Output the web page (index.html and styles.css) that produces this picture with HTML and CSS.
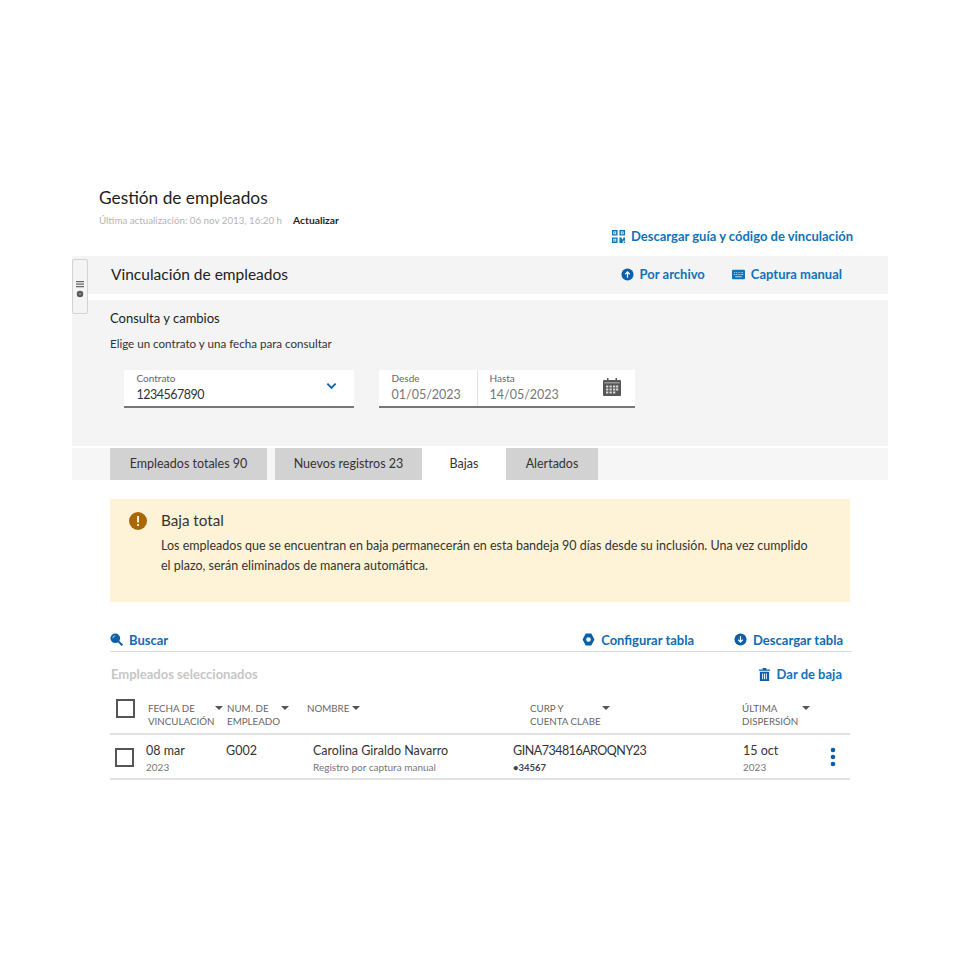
FILE: index.html
```html
<!DOCTYPE html>
<html lang="es">
<head>
<meta charset="utf-8">
<title>Gestión de empleados</title>
<link rel="stylesheet" href="styles.css">
</head>
<body>
<main class="page">
  <header class="page-head">
    <h1 class="title">Gestión de empleados</h1>
    <p class="updated"><span class="updated-date">Última actualización: 06 nov 2013, 16:20 h</span><span class="updated-link">Actualizar</span></p>
    <div class="guide">
      <a class="link">
        <svg class="icon" viewBox="0 0 14 14"><path fill="#1173b8" fill-rule="evenodd" d="M0 0h6v6H0zM1.500 1.500v3h3v-3zM8 0h6v6H8zM9.500 1.500v3h3v-3zM0 8h6v6H0zM1.500 9.500v3h3v-3zM8 8h2.500v2H12V8h2v3.500h-2.500V14H8zM12.500 12.500H14V14h-1.500z"/><path fill="#1173b8" d="M2.300 2.300h1.400v1.400H2.300zM10.300 2.300h1.400v1.400h-1.400zM2.300 10.300h1.400v1.400H2.300z"/></svg>
        Descargar guía y código de vinculación
      </a>
    </div>
  </header>

  <section class="panels">
    <div class="handle">
      <svg class="handle-icon" viewBox="0 0 10 20"><path fill="#666" d="M1 1h8v1.200H1zM1 3.500h8v1.200H1zM1 6h8v1.200H1z"/><circle cx="5" cy="14" r="3.200" fill="#555"/><circle cx="5" cy="14" r="1.300" fill="#888"/></svg>
    </div>

    <div class="bar">
      <h2 class="bar-title">Vinculación de empleados</h2>
      <div class="bar-actions">
        <a class="link">
          <svg class="icon" viewBox="0 0 14 14"><circle cx="7" cy="7" r="6.500" fill="#0a5fa8"/><path fill="none" stroke="#fff" stroke-width="1.300" d="M7 10.500V4.500M4.600 6.700 7 4.200l2.400 2.500"/></svg>
          Por archivo
        </a>
        <a class="link">
          <svg class="icon icon-wide" viewBox="0 0 14 11"><rect y="0.500" width="14" height="10" rx="1" fill="#1173b8"/><path fill="#bcdcf2" d="M2 3h1.200v1H2zM4 3h1.200v1H4zM6 3h1.200v1H6zM8 3h1.200v1H8zM10 3h2v1h-2zM2 5h1.200v1H2zM4 5h1.200v1H4zM6 5h1.200v1H6zM8 5h1.200v1H8zM10 5h2v1h-2zM3.500 7.500h7v1h-7z"/></svg>
          Captura manual
        </a>
      </div>
    </div>

    <div class="query">
      <h3 class="query-title">Consulta y cambios</h3>
      <p class="query-text">Elige un contrato y una fecha para consultar</p>
      <div class="fields">
        <div class="field field-contract">
          <div class="field-part">
            <span class="field-label">Contrato</span>
            <span class="field-value field-number">1234567890</span>
          </div>
          <svg class="chevron" viewBox="0 0 12 8"><path fill="none" stroke="#0a5fa8" stroke-width="2" d="M1.500 1.500 6 6l4.500-4.500"/></svg>
        </div>
        <div class="field field-dates">
          <div class="field-part field-from">
            <span class="field-label">Desde</span>
            <span class="field-value field-muted">01/05/2023</span>
          </div>
          <div class="field-part field-to">
            <span class="field-label">Hasta</span>
            <span class="field-value field-muted">14/05/2023</span>
          </div>
          <svg class="calendar" viewBox="0 0 18 18"><path fill="#565656" d="M1 2h3V0h1.500v2h7V0H14v2h3a1 1 0 0 1 1 1v14a1 1 0 0 1-1 1H1a1 1 0 0 1-1-1V3a1 1 0 0 1 1-1z"/><path fill="#d8d8d8" d="M1.500 4.600h15v.7h-15zM3 7.500h2.300v2H3zM6.500 7.500h2.300v2H6.500zM10 7.500h2.300v2H10zM13 7.500h2.300v2H13zM3 10.500h2.300v2H3zM6.500 10.500h2.300v2H6.500zM10 10.500h2.300v2H10zM13 10.500h2.300v2H13zM3 13.500h2.300v2H3zM6.500 13.500h2.300v2H6.500zM10 13.500h2.300v2H10z"/></svg>
        </div>
      </div>
    </div>

    <nav class="tabs">
      <span class="tab tab-total">Empleados totales 90</span>
      <span class="tab tab-new">Nuevos registros 23</span>
      <span class="tab tab-active">Bajas</span>
      <span class="tab tab-alert">Alertados</span>
    </nav>
  </section>

  <section class="content">
    <div class="notice">
      <svg class="notice-icon" viewBox="0 0 18 18"><circle cx="9" cy="9" r="9" fill="#a9670a"/><path fill="#fbeccd" d="M8 4h2v6.500H8zM8 12h2v2H8z"/></svg>
      <div>
        <h4 class="notice-title">Baja total</h4>
        <p class="notice-text">Los empleados que se encuentran en baja permanecerán en esta bandeja 90 días desde su inclusión. Una vez cumplido<br>el plazo, serán eliminados de manera automática.</p>
      </div>
    </div>

    <div class="toolbar">
      <a class="link">
        <svg class="icon" viewBox="0 0 14 14"><circle cx="5.700" cy="5.700" r="5.200" fill="#0a5fa8"/><path stroke="#0a5fa8" stroke-width="2.200" d="M9 9l4.300 4.300"/><path fill="none" stroke="#9cc7e6" stroke-width="1.100" d="M3 5.700a2.700 2.700 0 0 1 2.700-2.700"/></svg>
        Buscar
      </a>
      <div class="toolbar-right">
        <a class="link">
          <svg class="icon" viewBox="0 0 14 14"><path fill="#0a5fa8" fill-rule="evenodd" d="M4 .6h6L13.400 7 10 13.400H4L.6 7zM7 4.500a2.500 2.500 0 1 0 0 5 2.500 2.500 0 0 0 0-5z"/></svg>
          Configurar tabla
        </a>
        <a class="link">
          <svg class="icon" viewBox="0 0 14 14"><circle cx="7" cy="7" r="6.500" fill="#0a5fa8"/><path fill="none" stroke="#fff" stroke-width="1.300" d="M7 3.500v6M4.600 7.300 7 9.800l2.400-2.500"/></svg>
          Descargar tabla
        </a>
      </div>
    </div>

    <div class="selected">
      <span class="selected-label">Empleados seleccionados</span>
      <a class="link">
        <svg class="icon" viewBox="0 0 14 14"><path fill="#0a5fa8" fill-rule="evenodd" d="M5 0h4v1.500h4V3H1V1.500h4zM2 4h10v10H2zM4.500 6v6h1V6zM6.500 6v6h1V6zM8.500 6v6h1V6z"/></svg>
        Dar de baja
      </a>
    </div>

    <div class="table-head">
      <span class="check check-head"></span>
      <div class="th th-date"><span>FECHA DE<br>VINCULACIÓN</span><i class="caret"></i></div>
      <div class="th th-num"><span>NUM. DE<br>EMPLEADO</span><i class="caret"></i></div>
      <div class="th th-name"><span>NOMBRE</span><i class="caret"></i></div>
      <div class="th th-curp"><span>CURP Y<br>CUENTA CLABE</span><i class="caret"></i></div>
      <div class="th th-last"><span>ÚLTIMA<br>DISPERSIÓN</span><i class="caret"></i></div>
    </div>

    <div class="table-row">
      <span class="check"></span>
      <div class="td"><span class="td-main">08 mar</span><span class="td-sub">2023</span></div>
      <div class="td"><span class="td-main">G002</span></div>
      <div class="td"><span class="td-main">Carolina Giraldo Navarro</span><span class="td-sub">Registro por captura manual</span></div>
      <div class="td"><span class="td-main td-code">GINA734816AROQNY23</span><span class="td-sub td-dark">•34567</span></div>
      <div class="td"><span class="td-main">15 oct</span><span class="td-sub">2023</span></div>
      <svg class="kebab" viewBox="0 0 6 20"><circle cx="3" cy="3" r="2.300" fill="#0a5fa8"/><circle cx="3" cy="10" r="2.300" fill="#0a5fa8"/><circle cx="3" cy="17" r="2.300" fill="#0a5fa8"/></svg>
    </div>
  </section>
</main>
</body>
</html>
```

FILE: styles.css
```css
* { box-sizing: border-box; }
html, body { margin: 0; padding: 0; background: #fff; }
body { font-family: "Lato", "Liberation Sans", sans-serif; color: #222; }
h1, h2, h3, h4, p { margin: 0; font-weight: 400; }

.page { width: 960px; height: 960px; padding: 187px 72px 0; }

.page-head { padding-left: 27px; }
.title { font-size: 17.300px; line-height: 22px; color: #1d1d1d; }
.updated { margin-top: 5px; font-size: 9.750px; line-height: 12px; display: flex; gap: 11px; }
.updated-date { color: #b4b4b4; }
.updated-link { color: #1f1f1f; font-size: 10.300px; font-weight: 700; }
.guide { display: flex; justify-content: flex-end; padding-right: 35px; height: 30px; align-items: flex-start; padding-top: 2px; }

.link { display: inline-flex; align-items: center; gap: 6px; font-size: 13px; line-height: 16px; font-weight: 700; color: #1173b8; white-space: nowrap; }
.icon { width: 13px; height: 13px; flex: none; }
.icon-wide { height: 11px; }

.panels { position: relative; }
.handle { position: absolute; left: 0; top: 3px; width: 16px; height: 55px; background: #f4f4f4; border: 1px solid #d2d2d2; border-radius: 2px; display: flex; align-items: center; justify-content: center; padding-top: 7px; }
.handle-icon { width: 10px; height: 20px; }

.bar { height: 38px; background: #f4f4f4; display: flex; align-items: center; justify-content: space-between; padding: 0 46px 0 39px; }
.bar-title { font-size: 15.500px; line-height: 18px; margin-top: -2px; color: #222; }
.bar-actions { display: flex; gap: 27px; margin-top: -2px; }

.query { margin-top: 6px; height: 146px; background: #f4f4f4; padding: 10px 0 0 38px; }
.query-title { font-size: 13px; line-height: 16px; color: #1c1c1c; }
.query-text { margin-top: 10px; font-size: 11.600px; line-height: 16px; color: #333; }
.fields { display: flex; gap: 25px; margin: 18px 0 0 13.500px; }
.field { height: 38px; background: #fff; border-bottom: 2px solid #777; display: flex; align-items: center; }
.field-contract { width: 230px; justify-content: space-between; padding: 0 17px 0 13px; }
.field-dates { width: 256px; }
.field-part { display: flex; flex-direction: column; }
.field-from { width: 99px; height: 100%; padding-left: 13px; padding-top: 3px; border-right: 1px solid #e2e2e2; }
.field-to { width: 125px; height: 100%; padding-left: 12px; padding-top: 3px; }
.field-label { font-size: 10px; line-height: 11px; color: #666; }
.field-value { font-size: 12.500px; line-height: 16px; margin-top: 3px; color: #333; }
.field-number { letter-spacing: -0.500px; }
.field-muted { color: #777; }
.chevron { width: 11px; height: 8px; margin-bottom: 4px; }
.calendar { width: 18px; height: 18px; margin-bottom: 2px; }

.tabs { margin-top: 2px; height: 32px; background: #f6f6f6; padding: 0 0 0 38px; display: flex; }
.tab { display: flex; align-items: center; justify-content: center; font-size: 12.500px; color: #333; padding-bottom: 1px; }
.tab-total { width: 157px; background: #d2d2d2; }
.tab-new { width: 147px; margin-left: 8px; background: #d2d2d2; }
.tab-active { width: 84px; background: #fff; }
.tab-alert { width: 92px; background: #d2d2d2; }

.content { padding: 19px 36px 0 38px; }
.notice { width: 740px; height: 103px; background: #fef3d6; display: flex; gap: 14px; padding: 11px 0 0 19px; }
.notice-icon { width: 18px; height: 18px; margin-top: 2px; flex: none; }
.notice-title { font-size: 15.200px; line-height: 20px; color: #333; }
.notice-text { margin-top: 6px; font-size: 12.500px; line-height: 19.500px; color: #333; }

.toolbar { margin-top: 28px; height: 22px; border-bottom: 1px solid #dcdcdc; display: flex; justify-content: space-between; padding-right: 9px; }
.toolbar-right { display: flex; gap: 40px; }
.toolbar .link { height: 19px; color: #0f6cb4; }
.selected { height: 44px; display: flex; align-items: center; justify-content: space-between; padding: 0 10px 0 1px; }
.selected-label { font-size: 13px; font-weight: 700; color: #c6c6c6; }

.table-head { height: 39px; width: 740px; display: flex; position: relative; border-bottom: 2px solid #e2e2e2; }
.check { width: 19px; height: 19px; border: 2px solid #555; flex: none; background: #fff; }
.check-head { margin: 3px 13px 0 6px; }
.th { display: flex; align-items: flex-start; font-size: 9.750px; line-height: 13px; color: #666; padding-top: 6px; }
.th-date { width: 79px; justify-content: space-between; padding-right: 4px; }
.th-num { width: 80px; justify-content: space-between; padding-right: 18px; }
.th-name { width: 223px; gap: 3px; }
.th-curp { width: 212px; justify-content: space-between; padding-right: 132px; }
.th-last { width: 68px; justify-content: space-between; }
.caret { width: 0; height: 0; margin-top: 4px; border-left: 4px solid transparent; border-right: 4px solid transparent; border-top: 4px solid #555; }

.table-row { width: 740px; height: 45px; border-bottom: 2px solid #e2e2e2; display: flex; align-items: flex-start; padding-top: 8px; position: relative; }
.table-row .check { margin: 5px 12px 0 5px; }
.td { display: flex; flex-direction: column; }
.td:nth-of-type(1) { width: 80px; }
.td:nth-of-type(2) { width: 87px; }
.td:nth-of-type(3) { width: 200px; }
.td:nth-of-type(4) { width: 230px; }
.td-main { font-size: 12.500px; line-height: 16px; color: #333; }
.td-code { letter-spacing: -0.500px; }
.td-sub { margin-top: 2px; font-size: 10px; line-height: 12px; color: #777; }
.td-dark { color: #444; font-weight: 700; font-size: 9.500px; margin-top: 3px; }
.kebab { position: absolute; right: 14px; top: 12px; width: 6px; height: 20px; }
```
